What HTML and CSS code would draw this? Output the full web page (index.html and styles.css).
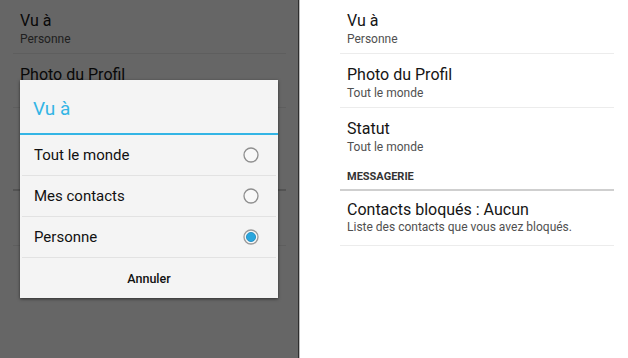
FILE: index.html
```html
<!DOCTYPE html>
<html lang="fr">
<head>
<meta charset="utf-8">
<link rel="stylesheet" href="styles.css">
</head>
<body>
<div class="screens">
  <section class="panel panel-dim">
    <div class="list list-left">
      <div class="item"><div class="title">Vu à</div><div class="summary">Personne</div></div>
      <div class="item"><div class="title">Photo du Profil</div><div class="summary">Tout le monde</div></div>
      <div class="item item-last"><div class="title">Statut</div><div class="summary">Tout le monde</div></div>
      <div class="category">MESSAGERIE</div>
      <div class="item item-contacts"><div class="title">Contacts bloqués : Aucun</div><div class="summary">Liste des contacts que vous avez bloqués.</div></div>
    </div>
    <div class="scrim"></div>
    <div class="dialog">
      <div class="dialog-title">Vu à</div>
      <div class="dialog-rule"></div>
      <div class="option"><span>Tout le monde</span>
        <svg class="radio" width="16" height="16" viewBox="0 0 16 16"><circle cx="8" cy="8" r="7" fill="#f8f8f8" stroke="#8e8e8e" stroke-width="1.3"/></svg>
      </div>
      <div class="option"><span>Mes contacts</span>
        <svg class="radio" width="16" height="16" viewBox="0 0 16 16"><circle cx="8" cy="8" r="7" fill="#f8f8f8" stroke="#8e8e8e" stroke-width="1.3"/></svg>
      </div>
      <div class="option"><span>Personne</span>
        <svg class="radio" width="16" height="16" viewBox="0 0 16 16"><circle cx="8" cy="8" r="7" fill="#f8f8f8" stroke="#9a9a9a" stroke-width="1.3"/><circle cx="8" cy="8" r="4.6" fill="#2aa6dd" stroke="#1a88bd" stroke-width="0.8"/></svg>
      </div>
      <div class="dialog-button">Annuler</div>
    </div>
  </section>
  <section class="panel panel-light">
    <div class="list list-right">
      <div class="item"><div class="title">Vu à</div><div class="summary">Personne</div></div>
      <div class="item"><div class="title">Photo du Profil</div><div class="summary">Tout le monde</div></div>
      <div class="item item-last"><div class="title">Statut</div><div class="summary">Tout le monde</div></div>
      <div class="category">MESSAGERIE</div>
      <div class="item item-contacts"><div class="title">Contacts bloqués : Aucun</div><div class="summary">Liste des contacts que vous avez bloqués.</div></div>
    </div>
  </section>
</div>
</body>
</html>
```
FILE: styles.css
```css
html, body {
  margin: 0;
  padding: 0;
  width: 628px;
  height: 358px;
  overflow: hidden;
  background: #ffffff;
  font-family: Roboto, "Noto Sans", "Liberation Sans", sans-serif;
}
.screens {
  display: flex;
  height: 358px;
}
.panel {
  position: relative;
  height: 358px;
  background: #ffffff;
  overflow: hidden;
}
.panel-dim {
  width: 298px;
  border-right: 1px solid #2e2e2e;
  box-shadow: 1px 0 0 #bdbdbd;
}
.panel-light {
  flex: 1;
  margin-left: 1px;
}
.list {
  display: flex;
  flex-direction: column;
}
.list-left {
  padding: 0 12px 0 13px;
}
.list-right {
  padding: 0 14px 0 40px;
}
.item {
  padding: 11px 7px 6px;
  border-bottom: 1px solid #ececec;
}
.item-last {
  border-bottom: none;
  padding-bottom: 1px;
}
.item-contacts {
  padding-top: 9px;
  padding-bottom: 11px;
}
.item-contacts .summary {
  line-height: 14px;
}
.title {
  font-size: 16px;
  line-height: 20px;
  color: #151515;
}
.summary {
  font-size: 12px;
  line-height: 16px;
  color: #505050;
}
.category {
  font-size: 11px;
  font-weight: bold;
  line-height: 14px;
  color: #333333;
  padding: 14px 7px 5px;
  border-bottom: 2px solid #cfcfcf;
}
.scrim {
  position: absolute;
  inset: 0;
  background: rgba(0, 0, 0, 0.6);
}
.dialog {
  position: absolute;
  left: 20px;
  top: 80px;
  width: 258px;
  height: 218px;
  background: #f4f4f4;
  box-shadow: 0 1px 3px rgba(0, 0, 0, 0.55);
  display: flex;
  flex-direction: column;
}
.dialog-title {
  height: 53px;
  box-sizing: border-box;
  padding: 17px 0 0 13px;
  font-size: 19px;
  line-height: 24px;
  color: #33b5e5;
}
.dialog-rule {
  height: 2px;
  background: #33b5e5;
}
.option {
  height: 40px;
  margin: 0 2px;
  padding: 0 17px 0 12px;
  display: flex;
  align-items: center;
  justify-content: space-between;
  border-bottom: 1px solid #e2e2e2;
  font-size: 15px;
  color: #111111;
}
.radio {
  display: block;
}
.dialog-button {
  flex: 1;
  display: flex;
  align-items: center;
  justify-content: center;
  font-size: 12.5px;
  font-weight: 500;
  color: #111111;
}
```
